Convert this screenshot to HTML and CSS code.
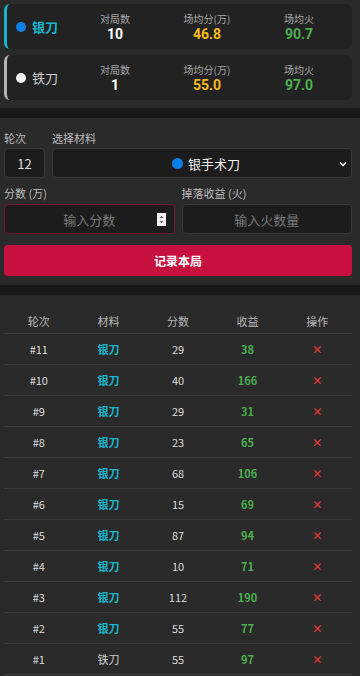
FILE: index.html
```html
<!DOCTYPE html>
<html lang="zh-CN">
<head>
<meta charset="utf-8">
<meta name="viewport" content="width=device-width, initial-scale=1">
<title>刀具记录</title>
<link rel="stylesheet" href="styles.css">
</head>
<body>
<section class="stats">
  <div class="card card-silver">
    <div class="name"><span class="dot dot-blue"></span><span class="name-text silver">银刀</span></div>
    <div class="stat"><span class="stat-label">对局数</span><span class="stat-value white">10</span></div>
    <div class="stat"><span class="stat-label">场均分(万)</span><span class="stat-value yellow">46.8</span></div>
    <div class="stat"><span class="stat-label">场均火</span><span class="stat-value green">90.7</span></div>
  </div>
  <div class="card card-iron">
    <div class="name"><span class="dot dot-white"></span><span class="name-text iron">铁刀</span></div>
    <div class="stat"><span class="stat-label">对局数</span><span class="stat-value white">1</span></div>
    <div class="stat"><span class="stat-label">场均分(万)</span><span class="stat-value yellow">55.0</span></div>
    <div class="stat"><span class="stat-label">场均火</span><span class="stat-value green">97.0</span></div>
  </div>
</section>

<section class="form">
  <div class="row row-top">
    <div class="col col-round">
      <label class="lbl">轮次</label>
      <div class="box box-round">12</div>
    </div>
    <div class="col col-mat">
      <label class="lbl">选择材料</label>
      <div class="box box-select">
        <span class="sel-text"><span class="dot dot-blue sel-dot"></span>银手术刀</span>
        <svg class="chev" width="10" height="10" viewBox="0 0 10 10"><path d="M2.5 4 L5 6.5 L7.5 4" fill="none" stroke="#e6e6e6" stroke-width="1.7" stroke-linecap="round" stroke-linejoin="round"/></svg>
      </div>
    </div>
  </div>
  <div class="row row-mid">
    <div class="col col-half">
      <label class="lbl">分数 (万)</label>
      <div class="field field-focus">
        <input class="inp" type="text" placeholder="输入分数">
        <span class="spin"><svg width="9" height="13" viewBox="0 0 9 13"><rect x="0" y="0" width="9" height="13" fill="#f2f2f2"/><path d="M2.5 5 L4.5 2.8 L6.5 5 Z" fill="#666"/><path d="M2.5 8 L4.5 10.2 L6.5 8 Z" fill="#666"/></svg></span>
      </div>
    </div>
    <div class="col col-half">
      <label class="lbl">掉落收益 (火)</label>
      <div class="field">
        <input class="inp" type="text" placeholder="输入火数量">
      </div>
    </div>
  </div>
  <button class="btn" type="button">记录本局</button>
</section>

<section class="history">
  <div class="trow thead">
    <span>轮次</span><span>材料</span><span>分数</span><span>收益</span><span>操作</span>
  </div>
  <div class="trow"><span class="c-no">#11</span><span class="c-mat silver">银刀</span><span class="c-score">29</span><span class="c-gain">38</span><span class="c-del">×</span></div>
  <div class="trow"><span class="c-no">#10</span><span class="c-mat silver">银刀</span><span class="c-score">40</span><span class="c-gain">166</span><span class="c-del">×</span></div>
  <div class="trow"><span class="c-no">#9</span><span class="c-mat silver">银刀</span><span class="c-score">29</span><span class="c-gain">31</span><span class="c-del">×</span></div>
  <div class="trow"><span class="c-no">#8</span><span class="c-mat silver">银刀</span><span class="c-score">23</span><span class="c-gain">65</span><span class="c-del">×</span></div>
  <div class="trow"><span class="c-no">#7</span><span class="c-mat silver">银刀</span><span class="c-score">68</span><span class="c-gain">106</span><span class="c-del">×</span></div>
  <div class="trow"><span class="c-no">#6</span><span class="c-mat silver">银刀</span><span class="c-score">15</span><span class="c-gain">69</span><span class="c-del">×</span></div>
  <div class="trow"><span class="c-no">#5</span><span class="c-mat silver">银刀</span><span class="c-score">87</span><span class="c-gain">94</span><span class="c-del">×</span></div>
  <div class="trow"><span class="c-no">#4</span><span class="c-mat silver">银刀</span><span class="c-score">10</span><span class="c-gain">71</span><span class="c-del">×</span></div>
  <div class="trow"><span class="c-no">#3</span><span class="c-mat silver">银刀</span><span class="c-score">112</span><span class="c-gain">190</span><span class="c-del">×</span></div>
  <div class="trow"><span class="c-no">#2</span><span class="c-mat silver">银刀</span><span class="c-score">55</span><span class="c-gain">77</span><span class="c-del">×</span></div>
  <div class="trow"><span class="c-no">#1</span><span class="c-mat iron">铁刀</span><span class="c-score">55</span><span class="c-gain">97</span><span class="c-del">×</span></div>
</section>
</body>
</html>
```

FILE: styles.css
```css
* { box-sizing: border-box; }

html, body {
  margin: 0;
  padding: 0;
  background: #181818;
  color: #e6e6e6;
  font-family: "Noto Sans CJK SC", "Noto Sans", "Liberation Sans", sans-serif;
}

.stats {
  background: #2a2a2a;
  padding: 4px 8px 8px 4px;
  display: flex;
  flex-direction: column;
  gap: 6px;
}

.card {
  height: 45px;
  background: #222222;
  border-radius: 6px;
  border-left: 3px solid #19b5cc;
  display: grid;
  grid-template-columns: 1fr 92px 92px 92px;
  align-items: center;
  padding: 0 7px 0 9px;
}
.card-iron { border-left-color: #b5b5b5; }

.name {
  display: flex;
  align-items: center;
  gap: 6px;
}
.dot {
  display: inline-block;
  width: 10px;
  height: 10px;
  border-radius: 50%;
}
.dot-blue { background: #0a7fe6; }
.dot-white { background: #f2f2f2; }

.name-text { font-size: 13px; line-height: 17px; }
.silver { color: #19b5cc; font-weight: 700; }
.iron { color: #cfcfcf; font-weight: 400; }

.stat {
  display: flex;
  flex-direction: column;
  align-items: center;
  padding-top: 1px;
}
.stat-label {
  display: block;
  font-size: 10px;
  line-height: 15px;
  color: #a8a8a8;
}
.stat-value {
  display: block;
  font-family: Roboto, "Liberation Sans", sans-serif;
  font-size: 14px;
  line-height: 17px;
  font-weight: 700;
}
.white { color: #ffffff; }
.yellow { color: #f7b918; }
.green { color: #4cae4f; }

.form {
  margin-top: 10px;
  background: #2a2a2a;
  padding: 13px 8px 9px 4px;
}
.row {
  display: flex;
  gap: 7px;
}
.row-mid { margin-top: 8px; gap: 7px; }
.col { display: flex; flex-direction: column; min-width: 0; }
.col-round { width: 41px; flex: none; }
.col-mat { flex: 1 1 0; }
.col-half { flex: 1 1 0; }

.lbl {
  font-size: 11px;
  line-height: 14px;
  color: #bdbdbd;
  margin-bottom: 3px;
}
.row-mid .lbl { margin-bottom: 4px; }

.box {
  height: 30px;
  background: #1c1c1d;
  border: 1px solid #3a3a3a;
  border-radius: 4px;
  display: flex;
  align-items: center;
  font-size: 13px;
}
.box-round {
  justify-content: center;
  color: #dcdcdc;
}
.box-select {
  position: relative;
  justify-content: center;
  color: #f2f2f2;
}
.sel-text {
  display: flex;
  align-items: center;
  gap: 5px;
  margin-left: 8px;
}
.sel-dot { width: 11px; height: 11px; }
.chev {
  position: absolute;
  right: 3px;
  top: 10px;
}

.field {
  height: 30px;
  background: #1c1c1d;
  border: 1px solid #3a3a3a;
  border-radius: 4px;
  display: flex;
  align-items: center;
  padding: 0 8px 0 8px;
}
.field-focus { border-color: #6e1a30; }
.inp {
  flex: 1;
  width: 0;
  min-width: 0;
  background: transparent;
  border: 0;
  outline: none;
  color: #e6e6e6;
  font-family: inherit;
  font-size: 13px;
  text-align: center;
  padding: 0;
}
.inp::placeholder { color: #7a7a7a; }
.field-focus .inp { padding-left: 9px; }
.spin { display: flex; }

.btn {
  display: block;
  width: 100%;
  height: 31px;
  margin-top: 11px;
  background: #c8103f;
  border: 0;
  border-radius: 4px;
  color: #ffffff;
  font-family: inherit;
  font-size: 12px;
  font-weight: 700;
}

.history {
  margin-top: 10px;
  background: #2a2a2a;
  padding: 14px 8px 4px 4px;
}
.trow {
  display: grid;
  grid-template-columns: repeat(5, 1fr);
  align-items: center;
  height: 31px;
  border-bottom: 1px solid #3c3c3c;
  font-size: 11px;
  text-align: center;
  color: #dcdcdc;
}
.thead {
  height: 25px;
  color: #b8b8b8;
  line-height: 14px;
}
.c-mat.silver { color: #19b5cc; font-weight: 700; }
.c-mat.iron { color: #cfcfcf; font-weight: 400; }
.c-gain { color: #4cae4f; font-weight: 700; }
.c-del { color: #e53935; font-weight: 700; font-size: 11px; }
```
